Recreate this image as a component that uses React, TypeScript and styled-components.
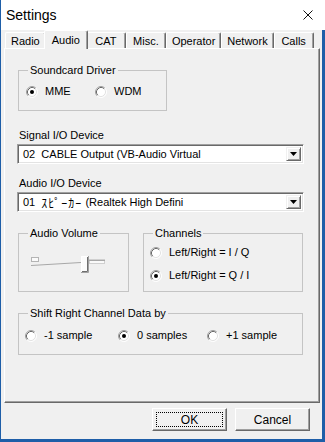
import React from 'react';
import styled, { createGlobalStyle } from 'styled-components';

const GlobalStyle = createGlobalStyle`
  html, body {
    margin: 0;
    padding: 0;
    background: #ffffff;
  }

  body {
    font-family: "Liberation Sans", Arial, sans-serif;
    font-size: 11px;
    color: #000000;
  }
`;

const Window = styled.div`
  width: 325px;
  height: 442px;
  box-sizing: border-box;
  display: flex;
  flex-direction: column;
  background: #f0f0f0;
  border-left: 1px solid #1e5ea8;
`;

const TitleBar = styled.div`
  flex: none;
  height: 30px;
  display: flex;
  align-items: center;
  justify-content: space-between;
  padding: 0 12px 0 5px;
  background: #ffffff;
  font-size: 14px;
`;

const Body = styled.div`
  flex: 1;
  display: flex;
  flex-direction: column;
  min-height: 0;
  padding: 0 2px 0 3px;
  border-right: 3px solid #1e5ea8;
  border-bottom: 3px solid #1e5ea8;
`;

const TabStrip = styled.div`
  flex: none;
  height: 18px;
  display: flex;
  align-items: flex-end;
  padding-left: 1px;
  position: relative;
  z-index: 1;
`;

const Tab = styled.div<{ $active?: boolean }>`
  box-sizing: border-box;
  height: ${(p) => (p.$active ? '19px' : '16px')};
  min-width: ${(p) => (p.$active ? '43px' : '40px')};
  margin: ${(p) => (p.$active ? '0 -2px -1px' : '0')};
  padding: ${(p) => (p.$active ? '0 7px 1px' : '0 5px')};
  display: flex;
  align-items: center;
  justify-content: center;
  background: #f0f0f0;
  border-top: 1px solid #ffffff;
  border-left: 1px solid #ffffff;
  border-right: 1px solid #696969;
  border-radius: 2px 2px 0 0;
  box-shadow: inset -1px 0 0 #a0a0a0;
  position: relative;
  z-index: ${(p) => (p.$active ? 2 : 1)};
  white-space: nowrap;
`;

const Panel = styled.div`
  flex: 1;
  min-height: 0;
  display: flex;
  flex-direction: column;
  align-items: flex-start;
  padding-left: 13px;
  border-top: 1px solid #ffffff;
  border-left: 1px solid #ffffff;
  border-right: 1px solid #696969;
  border-bottom: 1px solid #696969;
  box-shadow: inset -1px -1px 0 #a0a0a0;
`;

const GroupBox = styled.fieldset<{ $width: number; $height: number; $top: number }>`
  box-sizing: border-box;
  width: ${(p) => p.$width}px;
  height: ${(p) => p.$height}px;
  margin: ${(p) => p.$top}px 0 0;
  padding: 0;
  border: 1px solid #c4c4c4;
  min-width: 0;
`;

const Legend = styled.legend`
  margin-left: 9px;
  padding: 0 2px;
  line-height: 13px;
`;

const RadioGrid = styled.div<{ $cols: string; $pad: string }>`
  display: grid;
  grid-template-columns: ${(p) => p.$cols};
  padding: ${(p) => p.$pad};
`;

const RadioStack = styled.div`
  display: flex;
  flex-direction: column;
  gap: 10px;
  padding: 6px 0 0 6px;
`;

const Option = styled.label`
  display: flex;
  align-items: center;
  gap: 7px;
  line-height: 13px;
  white-space: nowrap;
`;

const FieldLabel = styled.div<{ $top: number }>`
  margin: ${(p) => p.$top}px 0 0 1px;
  line-height: 13px;
`;

const Combo = styled.div`
  box-sizing: border-box;
  width: 287px;
  height: 20px;
  margin: 2px 0 0 -1px;
  display: flex;
  background: #ffffff;
  border-top: 1px solid #a0a0a0;
  border-left: 1px solid #a0a0a0;
  border-right: 1px solid #ffffff;
  border-bottom: 1px solid #ffffff;
  box-shadow: inset 1px 1px 0 #696969, inset -1px -1px 0 #e3e3e3;
  padding: 2px;
`;

const ComboText = styled.div`
  flex: 1;
  display: flex;
  align-items: center;
  padding-left: 3px;
  white-space: pre;
  overflow: hidden;
  font-family: "Liberation Sans", Arial, "Noto Sans CJK JP", sans-serif;
`;

const Kana = styled.span`
  font-size: 12px;
  letter-spacing: 1px;
`;

const DropButton = styled.div`
  box-sizing: border-box;
  width: 15px;
  display: flex;
  align-items: center;
  justify-content: center;
  background: #f0f0f0;
  border-top: 1px solid #f0f0f0;
  border-left: 1px solid #f0f0f0;
  border-right: 1px solid #696969;
  border-bottom: 1px solid #696969;
  box-shadow: inset 1px 1px 0 #ffffff, inset -1px -1px 0 #a0a0a0;
`;

const Row = styled.div`
  display: flex;
  gap: 14px;
`;

const SliderWrap = styled.div`
  padding: 16px 0 0 12px;
`;

const Footer = styled.div`
  flex: none;
  height: 36px;
  box-sizing: border-box;
  display: flex;
  justify-content: flex-end;
  align-items: flex-start;
  gap: 8px;
  padding: 5px 10px 0 0;
`;

const Button = styled.div`
  box-sizing: border-box;
  width: 75px;
  height: 23px;
  display: flex;
  padding: 3px;
  background: #f0f0f0;
  border-top: 1px solid #ffffff;
  border-left: 1px solid #ffffff;
  border-right: 1px solid #696969;
  border-bottom: 1px solid #696969;
  box-shadow: inset -1px -1px 0 #a0a0a0;
`;

const ButtonFace = styled.span<{ $focused?: boolean }>`
  flex: 1;
  display: flex;
  align-items: center;
  justify-content: center;
  border: 1px dotted ${(p) => (p.$focused ? '#000000' : 'transparent')};
  font-size: 12px;
`;

const RadioMark = ({ checked }: { checked?: boolean }) => (
  <svg width="12" height="12" viewBox="0 0 12 12">
    <circle cx="6" cy="6" r="5" fill="#ffffff" />
    <path d="M2.11 9.89A5.5 5.5 0 0 1 9.89 2.11" stroke="#a0a0a0" fill="none" />
    <path d="M2.82 9.18A4.5 4.5 0 0 1 9.18 2.82" stroke="#696969" fill="none" />
    <path d="M9.89 2.11A5.5 5.5 0 0 1 2.11 9.89" stroke="#ffffff" fill="none" />
    <path d="M9.18 2.82A4.5 4.5 0 0 1 2.82 9.18" stroke="#e3e3e3" fill="none" />
    {checked && <circle cx="6" cy="6" r="2" fill="#000000" />}
  </svg>
);

const Radio = ({ label, checked }: { label: string; checked?: boolean }) => (
  <Option>
    <RadioMark checked={checked} />
    <span>{label}</span>
  </Option>
);

const DeviceCombo = ({ children }: { children: React.ReactNode }) => (
  <Combo>
    <ComboText>{children}</ComboText>
    <DropButton>
      <svg width="7" height="4" viewBox="0 0 7 4">
        <polygon points="0,0 7,0 3.5,4" fill="#000000" />
      </svg>
    </DropButton>
  </Combo>
);

const VolumeSlider = () => (
  <svg width="76" height="18" viewBox="0 0 76 18">
    <rect x="0.5" y="1.5" width="7" height="4" fill="#fafafa" stroke="#b4b4b4" />
    <path d="M0 9.5 L50 6.5" stroke="#a8a8a8" fill="none" />
    <rect x="58.5" y="3.5" width="15" height="4" fill="#fafafa" stroke="#d0d0d0" />
    <path d="M58 4.5 H74" stroke="#a8a8a8" fill="none" />
    <rect x="50" y="0" width="8" height="16" fill="#fbfbfb" />
    <path d="M56.5 1 V15.5 H50" stroke="#6e6e6e" fill="none" />
    <path d="M57.5 0 V16.5 H50" stroke="#a0a0a0" fill="none" />
    <path d="M50.5 16 V0.5 H57" stroke="#ffffff" fill="none" />
  </svg>
);

const tabs = ['Radio', 'Audio', 'CAT', 'Misc.', 'Operator', 'Network', 'Calls'];

const App = () => (
  <>
    <GlobalStyle />
    <Window>
      <TitleBar>
        <span>Settings</span>
        <svg width="10" height="10" viewBox="0 0 10 10">
          <path d="M0.5 0.5 L9.5 9.5 M9.5 0.5 L0.5 9.5" stroke="#111111" strokeWidth="1" fill="none" />
        </svg>
      </TitleBar>
      <Body>
        <TabStrip>
          {tabs.map((t) => (
            <Tab key={t} $active={t === 'Audio'}>{t}</Tab>
          ))}
        </TabStrip>
        <Panel>
          <GroupBox $width={149} $height={47} $top={15}>
            <Legend>Soundcard Driver</Legend>
            <RadioGrid $cols="69px auto" $pad="8px 0 0 7px">
              <Radio label="MME" checked />
              <Radio label="WDM" />
            </RadioGrid>
          </GroupBox>

          <FieldLabel $top={18}>Signal I/O Device</FieldLabel>
          <DeviceCombo>02  CABLE Output (VB-Audio Virtual</DeviceCombo>

          <FieldLabel $top={13}>Audio I/O Device</FieldLabel>
          <DeviceCombo>
            01  <Kana>ｽﾋﾟｰｶｰ</Kana> (Realtek High Defini
          </DeviceCombo>

          <Row>
            <GroupBox $width={111} $height={65} $top={15}>
              <Legend>Audio Volume</Legend>
              <SliderWrap>
                <VolumeSlider />
              </SliderWrap>
            </GroupBox>
            <GroupBox $width={160} $height={65} $top={15}>
              <Legend>Channels</Legend>
              <RadioStack>
                <Radio label="Left/Right = I / Q" />
                <Radio label="Left/Right = Q / I" checked />
              </RadioStack>
            </GroupBox>
          </Row>

          <GroupBox $width={285} $height={48} $top={15}>
            <Legend>Shift Right Channel Data by</Legend>
            <RadioGrid $cols="93px 89px auto" $pad="9px 0 0 6px">
              <Radio label="-1 sample" />
              <Radio label="0 samples" checked />
              <Radio label="+1 sample" />
            </RadioGrid>
          </GroupBox>
        </Panel>
        <Footer>
          <Button>
            <ButtonFace $focused>OK</ButtonFace>
          </Button>
          <Button>
            <ButtonFace>Cancel</ButtonFace>
          </Button>
        </Footer>
      </Body>
    </Window>
  </>
);

export default App;
